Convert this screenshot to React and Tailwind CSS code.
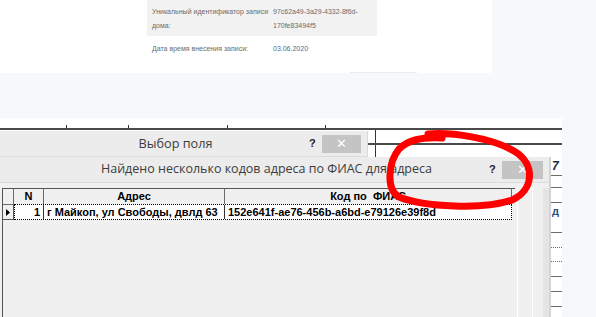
import React from "react";

const ui = { fontFamily: '"Open Sans", "Noto Sans", sans-serif' };
const win = { fontFamily: '"Liberation Sans", Arial, sans-serif' };

// right strip of the window behind the dialogs
const StripRow = ({ h, line = "solid", children }) => (
  <div
    className={`border-b border-[#6b6b6b] flex items-center pl-[1px] text-[11px] font-bold leading-none ${
      line === "dotted" ? "border-dotted" : "border-solid"
    }`}
    style={{ height: h }}
  >
    {children}
  </div>
);

const TitleBar = ({ title, closeW, size }) => (
  <div className="h-[26px] grid items-center bg-[#ececec] border-b border-[#dcdcdc]">
    <div className={`[grid-area:1/1] text-center pr-[16px] text-[#3c3c3c] ${size}`} style={ui}>
      {title}
    </div>
    <div className="[grid-area:1/1] justify-self-end flex items-center mr-[6px]">
      <div className="text-[11px] font-bold text-[#222] w-[13px]" style={win}>?</div>
      <div
        className="h-[18px] bg-[#c4c4c4] flex items-center justify-center text-white text-[13px]"
        style={{ width: closeW }}
      >
        ✕
      </div>
    </div>
  </div>
);

export default function App() {
  return (
    <div className="relative w-[596px] h-[317px] overflow-hidden bg-[#f7f8fa]">
      {/* card from the web page */}
      <div className="w-[492px] h-[73px] bg-white flex flex-col" style={win}>
        <div className="ml-[147px] w-[230px] h-[36px] bg-[#f2f2f2] flex pt-[5px] text-[7px] leading-[14px] text-[#6b6b6b] whitespace-nowrap">
          <div className="w-[126px] pl-[5px]">
            Уникальный идентификатор записи
            <br />
            дома:
          </div>
          <div>
            97c62a49-3a29-4332-8f6d-
            <br />
            170fe83494f5
          </div>
        </div>
        <div className="ml-[147px] flex pt-[6px] text-[7px] leading-[14px] whitespace-nowrap">
          <div className="w-[126px] pl-[5px] text-[#6b6b6b]">Дата время внесения записи:</div>
          <div className="text-[#4b6a92]">03.06.2020</div>
        </div>
        <div className="mt-auto ml-[350px] w-[67px] h-[1px] bg-[#ececec]" />
      </div>

      {/* window behind */}
      <div className="mt-[45px] w-[562px] h-[199px] bg-white flex flex-col">
        <div className="h-[10px] flex items-end">
          <div className="w-[67px] h-[3px] border-r border-[#333]" />
          <div className="w-[62px] h-[3px] border-r border-[#333]" />
          <div className="w-[99px] h-[3px] border-r border-[#333]" />
          <div className="w-[98px] h-[3px] border-r border-[#333]" />
        </div>
        <div className="h-[2px] bg-[#4a4a4a]" />
        <div className="h-[13px] flex">
          <div className="w-[375px]" />
          <div className="w-[1px] bg-[#333]" />
        </div>
        <div className="h-[2px] ml-[367px] bg-[#4a4a4a]" />
        <div className="h-[12px] flex">
          <div className="w-[375px]" />
          <div className="w-[1px] bg-[#333]" />
        </div>
        <div className="flex flex-1">
          <div className="w-[551px]" />
          <div className="w-[11px] flex flex-col" style={win}>
            <StripRow h={19}>
              <span className="italic text-[#1b2a4a] text-[12px]">7</span>
            </StripRow>
            <StripRow h={12} />
            <StripRow h={15} />
            <StripRow h={30}>
              <span className="text-[#2a4f8a] -mt-[12px]">д</span>
            </StripRow>
            <StripRow h={15} line="dotted" />
            <StripRow h={14} line="dotted" />
            <StripRow h={15} />
            <StripRow h={15} />
            <StripRow h={15} />
          </div>
        </div>
      </div>

      {/* dialog: Выбор поля */}
      <div className="absolute left-0 top-[131px] w-[368px] h-[186px] bg-[#f0f0f0] border-r border-[#dadada]">
        <TitleBar title="Выбор поля" closeW={39} size="text-[12.7px]" />
      </div>

      {/* dialog: Найдено несколько кодов */}
      <div className="absolute left-0 top-[157px] w-[551px] h-[160px] bg-[#f0f0f0] border-r-2 border-[#d4d4d4] flex flex-col">
        <TitleBar title="Найдено несколько кодов адреса по ФИАС для адреса" closeW={41} size="text-[12.5px]" />
        <div className="flex flex-1 pt-[5px]">
          <div className="ml-[2px] w-[515px] border-l border-t border-[#555] flex flex-col" style={win}>
            <div className="flex h-[16px] text-[11px] font-bold text-black leading-none">
              <div className="w-[11px] border-r border-b border-[#6b6b6b]" />
              <div className="w-[30px] border-r border-b border-[#6b6b6b] flex items-center justify-center">N</div>
              <div className="w-[181px] border-r border-b border-[#6b6b6b] flex items-center justify-center">Адрес</div>
              <div className="w-[287px] border-r border-b border-[#6b6b6b] flex items-center justify-center">
                Код по&nbsp;&nbsp;ФИАС
              </div>
            </div>
            <div className="flex h-[15px] text-[11px] font-bold text-black leading-none">
              <div className="w-[11px] border-r border-b border-[#555] flex items-center justify-center">
                <svg width="4" height="7" viewBox="0 0 4 7">
                  <path d="M0 0 L4 3.5 L0 7 Z" fill="#000" />
                </svg>
              </div>
              <div className="flex border border-dotted border-black bg-white -mt-[1px] h-[16px]">
                <div className="w-[29px] border-r border-[#333] flex items-center justify-end pr-[3px]">1</div>
                <div className="w-[181px] border-r border-[#333] flex items-center pl-[3px]">
                  г Майкоп, ул Свободы, двлд 63
                </div>
                <div className="w-[286px] flex items-center pl-[3px]">152e641f-ae76-456b-a6bd-e79126e39f8d</div>
              </div>
            </div>
          </div>
          <div className="w-[2px]" />
          <div className="w-[1px] bg-white" />
          <div className="w-[14px]" />
          <div className="w-[1px] bg-white" />
          <div className="w-[10px]" />
          <div className="w-[6px] bg-[#e4e4e4]" />
        </div>
      </div>

      {/* hand-drawn red marker */}
      <svg className="absolute left-0 top-0 pointer-events-none" width="596" height="317" viewBox="0 0 596 317">
        <path
          d="M428 134 C452 132 492 138 514 151 C536 164 534 190 512 200 C484 210 424 207 399 197 C385 189 389 161 399 149 C408 140 421 137 442 138"
          fill="none"
          stroke="#ff0000"
          strokeWidth="7"
          strokeLinecap="round"
        />
      </svg>
    </div>
  );
}
